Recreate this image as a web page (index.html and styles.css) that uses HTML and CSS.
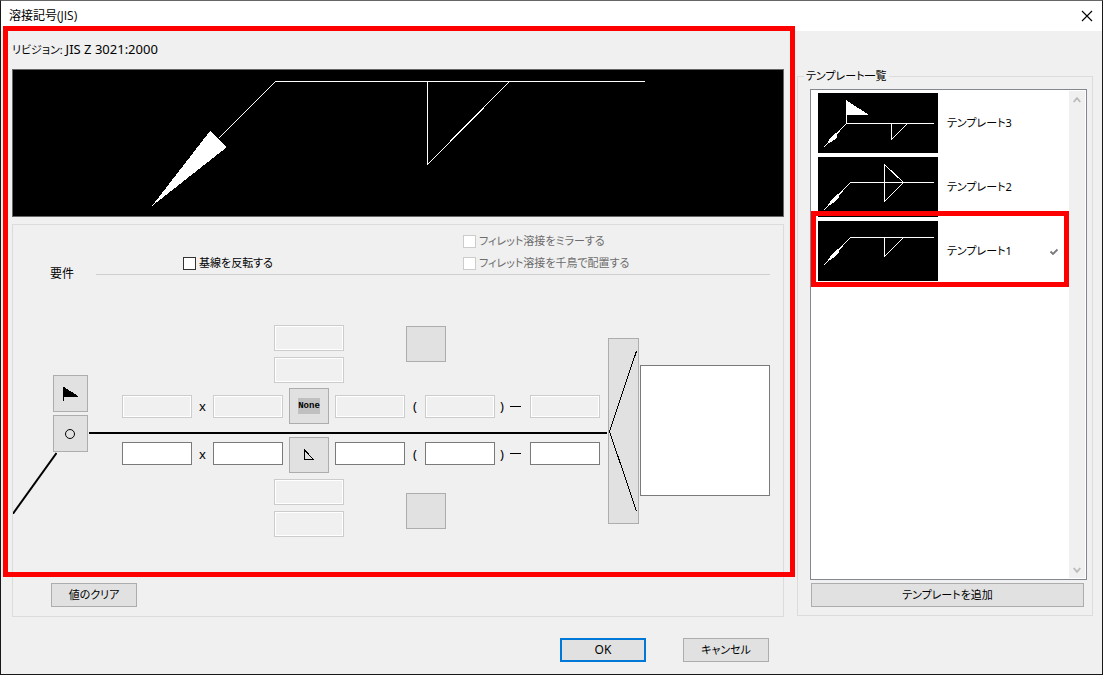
FILE: index.html
```html
<!DOCTYPE html>
<html lang="ja">
<head>
<meta charset="utf-8">
<meta name="viewport" content="width=device-width, initial-scale=1">
<title>溶接記号(JIS)</title>
<link rel="stylesheet" href="styles.css">
</head>
<body>
<div class="dialog" role="dialog" aria-labelledby="dialog-title">
  <header class="titlebar">
    <h1 class="title" id="dialog-title">溶接記号(JIS)</h1>
    <button class="close" type="button" aria-label="閉じる">
      <svg width="12" height="12" viewBox="0 0 12 12"><path d="M1 1 11 11M11 1 1 11" fill="none" stroke="#000" stroke-width="1.1"/></svg>
    </button>
  </header>

  <div class="content">
    <main class="editor">
      <p class="revision">リビジョン: <span class="standard">JIS Z 3021:2000</span></p>
      <div class="preview">
        <svg class="drawing" viewBox="13 70 770 146" preserveAspectRatio="xMidYMid meet" role="img" aria-label="溶接記号プレビュー">
          <path d="M218.500 138.500 275.500 81.500H645M427.500 81.500V164.500L509.500 81.500" class="stroke"/>
          <path d="M152 206 210 131 227 147Z" class="fill"/>
        </svg>
      </div>

      <section class="panel">
        <div class="requirements">
          <h2 class="requirements-label">要件</h2>
          <div class="options">
            <label class="check check-invert"><input type="checkbox">基線を反転する</label>
            <label class="check check-mirror"><input type="checkbox" disabled>フィレット溶接をミラーする</label>
            <label class="check check-stagger"><input type="checkbox" disabled>フィレット溶接を千鳥で配置する</label>
          </div>
        </div>

        <div class="symbol">
          <div class="leader">
            <button class="tool" type="button" aria-label="現場溶接">
              <svg width="16" height="16" viewBox="0 0 16 16" shape-rendering="crispEdges"><path d="M0 1h1l14 9v1H1v4H0z"/></svg>
            </button>
            <button class="tool" type="button" aria-label="全周溶接">
              <svg width="13" height="12" viewBox="0 0 13 12"><circle cx="6" cy="6" r="4.500" fill="none" stroke="#000"/></svg>
            </button>
            <svg class="leader-line" width="44" height="62" viewBox="0 0 44 62" aria-hidden="true"><path d="M-1 63 43.500 1" stroke="#000" stroke-width="2"/></svg>
          </div>

          <div class="fields">
            <div class="stack stack-top">
              <input class="field field-tall" type="text" aria-label="反対側 1" disabled>
              <input class="field field-tall" type="text" aria-label="反対側 2" disabled>
            </div>
            <button class="tool contour contour-top" type="button" aria-label="反対側の仕上げ"></button>

            <div class="line-row">
              <input class="field c-size" type="text" aria-label="反対側の寸法" disabled>
              <span class="sign c-times">x</span>
              <input class="field c-second" type="text" aria-label="反対側の寸法 2" disabled>
              <button class="tool c-kind" type="button"><span class="none">None</span></button>
              <input class="field c-length" type="text" aria-label="反対側の長さ" disabled>
              <span class="sign c-open">(</span>
              <input class="field c-count" type="text" aria-label="反対側の数" disabled>
              <span class="sign c-close">)<i class="dash"></i></span>
              <input class="field c-pitch" type="text" aria-label="反対側のピッチ" disabled>
            </div>

            <hr class="baseline">

            <div class="line-row line-row-arrow">
              <input class="field c-size" type="text" aria-label="矢の側の寸法">
              <span class="sign c-times">x</span>
              <input class="field c-second" type="text" aria-label="矢の側の寸法 2">
              <button class="tool c-kind" type="button" aria-label="すみ肉溶接">
                <svg width="12" height="12" viewBox="0 0 12 12" shape-rendering="crispEdges"><path d="M1.500 1V10.500H10.500Z" fill="none" stroke="#000"/></svg>
              </button>
              <input class="field c-length" type="text" aria-label="矢の側の長さ">
              <span class="sign c-open">(</span>
              <input class="field c-count" type="text" aria-label="矢の側の数">
              <span class="sign c-close">)<i class="dash"></i></span>
              <input class="field c-pitch" type="text" aria-label="矢の側のピッチ">
            </div>

            <div class="stack stack-bottom">
              <input class="field field-tall" type="text" aria-label="矢の側 1" disabled>
              <input class="field field-tall" type="text" aria-label="矢の側 2" disabled>
            </div>
            <button class="tool contour contour-bottom" type="button" aria-label="矢の側の仕上げ"></button>
          </div>

          <button class="tool tail" type="button" aria-label="尾">
            <svg width="29" height="184" viewBox="0 0 29 184" shape-rendering="crispEdges"><path d="M27.500 12 .5 92.500 27.500 172" fill="none" stroke="#000"/></svg>
          </button>
          <textarea class="note" aria-label="注記"></textarea>
        </div>

        <button class="button" type="button">値のクリア</button>
      </section>
      <div class="highlight highlight-editor"></div>
    </main>

    <fieldset class="templates">
      <legend class="legend">テンプレート一覧</legend>
      <div class="list">
        <ul class="items">
          <li class="item">
            <svg class="thumb" viewBox="818 93 120 60" aria-hidden="true">
              <path d="M823.500 147.500 846.500 123.500H934M846.500 123.500V100M891.500 123.500V139.500L907.500 123.500" class="stroke"/>
              <path d="M846 100 869 115H846Z" class="fill"/>
              <path d="M826 145 831 137 835 133 837 135V138L831 142Z" class="fill"/>
            </svg>
            <span class="name">テンプレート3</span>
          </li>
          <li class="item">
            <svg class="thumb" viewBox="818 157 120 60" aria-hidden="true">
              <path d="M823.500 210.500 850.500 182.500H934M884.500 164.500V201.500L903.500 182.500Z" class="stroke"/>
              <path d="M826 208 832 199 837 194 839 195V198L833 203Z" class="fill"/>
            </svg>
            <span class="name">テンプレート2</span>
          </li>
          <li class="item item-current">
            <svg class="thumb" viewBox="818 221 120 60" aria-hidden="true">
              <path d="M823.500 265.500 850.500 237.500H934M884.500 237.500V256.500L903.500 237.500" class="stroke"/>
              <path d="M826 263 832 254 837 249 839 250V253L833 258Z" class="fill"/>
            </svg>
            <span class="name">テンプレート1</span>
            <svg class="tick" width="10" height="8" viewBox="0 0 10 8" aria-label="選択中"><path d="M1.500 4.500 4 7 8.500 2.500" fill="none" stroke="#7a7a7a" stroke-width="1.800"/></svg>
            <div class="highlight highlight-item"></div>
          </li>
        </ul>
        <div class="scrollbar">
          <button class="arrow" type="button" aria-label="上へ" disabled><svg width="8" height="8" viewBox="0 0 8 8"><path d="M.7 6 4 2.200 7.300 6" fill="none" stroke="#bababa" stroke-width="1.800"/></svg></button>
          <button class="arrow" type="button" aria-label="下へ" disabled><svg width="8" height="8" viewBox="0 0 8 8"><path d="M.7 2 4 5.800 7.300 2" fill="none" stroke="#bababa" stroke-width="1.800"/></svg></button>
        </div>
      </div>
      <button class="button button-add" type="button">テンプレートを追加</button>
    </fieldset>
  </div>

  <footer class="actions">
    <button class="button button-default" type="button">OK</button>
    <button class="button" type="button">キャンセル</button>
  </footer>
</div>
</body>
</html>
```

FILE: styles.css
```css
* {
  box-sizing: border-box;
}

body,
h1,
h2,
p,
ul {
  margin: 0;
  padding: 0;
}

body,
button,
input,
textarea {
  font-family: "Noto Sans", "Noto Sans CJK JP", sans-serif;
  font-size: 11px;
  line-height: 16px;
  font-feature-settings: "palt";
  color: #000;
}

.dialog {
  display: flex;
  flex-direction: column;
  min-height: 100vh;
  min-width: 960px;
  background: #f0f0f0;
  border: 1px solid #181818;
  border-top-color: #666;
}

.titlebar {
  display: flex;
  align-items: center;
  justify-content: space-between;
  height: 30px;
  padding: 0 9px 0 8px;
  background: #fff;
}

.title {
  font-family: "Open Sans", "Noto Sans CJK JP", sans-serif;
  font-size: 12px;
  font-weight: 400;
}

.close {
  display: flex;
  padding: 0;
  border: 0;
  background: none;
}

.content {
  display: flex;
  flex: 1;
  gap: 13px;
  padding: 0 9px 0 11px;
}

.editor {
  position: relative;
  display: flex;
  flex: 1;
  flex-direction: column;
}

.revision {
  padding: 10px 0 11px;
}

.standard {
  font-size: 13px;
}

.preview {
  display: flex;
  height: 148px;
  margin-bottom: 7px;
  border: 1px solid #666;
  background: #000;
}

.drawing {
  width: 100%;
  height: 100%;
}

.drawing,
.thumb {
  shape-rendering: crispEdges;
}

.stroke {
  fill: none;
  stroke: #fff;
  stroke-width: 1px;
}

.fill {
  fill: #fff;
}

.panel {
  flex: 1;
  padding: 5px 13px 9px 0;
  border: 1px solid #dcdcdc;
}

.requirements {
  display: flex;
  align-items: flex-start;
  padding-left: 37px;
}

.requirements-label {
  width: 46px;
  padding-top: 36px;
  font-size: 12px;
  font-weight: 400;
}

.options {
  display: grid;
  flex: 1;
  grid-template-columns: 280px 1fr;
  grid-template-rows: 22px 22px;
  align-items: center;
  padding-left: 87px;
  border-bottom: 1px solid #d0d0d0;
}

.check {
  display: flex;
  align-items: center;
  gap: 3px;
}

.check:has(:disabled) {
  color: #6d6d6d;
}

.check input {
  width: 13px;
  height: 13px;
  margin: 0;
  appearance: none;
  border: 1px solid #333;
  background: #fff;
}

.check input:disabled {
  border-color: #ccc;
}

.check-invert {
  grid-area: 2 / 1;
}

.check-mirror {
  grid-area: 1 / 2;
}

.check-stagger {
  grid-area: 2 / 2;
}

.symbol {
  display: flex;
  align-items: flex-start;
  margin: 43px 0 46px;
}

.leader {
  display: flex;
  flex-direction: column;
  gap: 3px;
  width: 76px;
  padding-top: 50px;
}

.tool {
  display: flex;
  align-items: center;
  justify-content: center;
  padding: 0;
  border: 1px solid #adadad;
  background: #e1e1e1;
}

.leader .tool {
  width: 35px;
  height: 37px;
  margin-left: 40px;
}

.leader-line {
  margin-top: -3px;
}

.fields,
.line-row {
  display: grid;
  grid-template-columns: 33px 1fr 21px 1fr 6px 40px 6px 1fr 20px 1fr 35px 1fr 7px;
}

.fields {
  flex: 1;
}

.line-row {
  grid-area: 2 / 1 / auto / -1;
  align-items: center;
  margin-top: 5px;
}

.line-row-arrow {
  grid-row: 4;
  margin-top: 3px;
}

.line-row-arrow .field,
.line-row-arrow .sign {
  margin-bottom: 3px;
}

.c-size { grid-column: 2; }
.c-times { grid-column: 3; }
.c-second { grid-column: 4; }
.c-kind { grid-column: 6; }
.c-length { grid-column: 8; }
.c-open { grid-column: 9; }
.c-count { grid-column: 10; }
.c-close { grid-column: 11; }
.c-pitch { grid-column: 12; }

.c-kind {
  height: 36px;
}

.field {
  width: 100%;
  min-width: 0;
  height: 23px;
  padding: 0 3px;
  border: 1px solid #7a7a7a;
  background: #fff;
}

.field:disabled {
  border-color: #ccc;
  background: #f0f0f0;
  box-shadow: inset 0 0 0 1px #fff;
}

.field-tall {
  height: 26px;
}

.sign {
  display: flex;
  align-items: center;
  justify-content: center;
  font-size: 13px;
}

.c-close {
  justify-content: flex-start;
  gap: 6px;
  padding-left: 5px;
}

.dash {
  width: 11px;
  border-top: 1px solid #000;
}

.stack {
  display: grid;
  grid-column: 4 / 9;
  gap: 6px;
  justify-self: center;
  width: 70px;
}

.stack-top {
  grid-row: 1;
}

.stack-bottom {
  grid-row: 5;
  margin-top: 6px;
}

.contour {
  grid-column: 9 / 11;
  width: 40px;
  height: 36px;
  margin: 1px;
}

.contour-top {
  grid-row: 1;
}

.contour-bottom {
  grid-row: 5;
  align-self: end;
  margin-bottom: 8px;
}

.baseline {
  grid-area: 3 / 1 / auto / -1;
  width: 100%;
  height: 2px;
  margin: 8px 0 0;
  border: 0;
  background: #000;
}

.none {
  background: #c0c0c0;
  font-family: "Liberation Mono", monospace;
  font-size: 9px;
  font-weight: 700;
}

.tail {
  width: 31px;
  height: 186px;
  margin: 13px 1px 0;
}

.note {
  width: 130px;
  height: 131px;
  margin-top: 40px;
  border: 1px solid #7a7a7a;
  border-radius: 0;
  background: #fff;
  resize: none;
}

.button {
  width: 86px;
  height: 24px;
  padding: 0;
  border: 1px solid #adadad;
  background: #e1e1e1;
}

.panel > .button {
  display: block;
  margin-left: 38px;
}

.button-default {
  border: 2px solid #0078d7;
  font-size: 12px;
}

.highlight {
  position: absolute;
  z-index: 1;
  border: 5px solid #f00;
  pointer-events: none;
}

.highlight-editor {
  inset: -5px -11px 40px -9px;
}

.highlight-item {
  inset: -10px 0 -6px;
}

.templates {
  display: flex;
  flex-direction: column;
  width: 296px;
  margin: 37px 0 1px;
  padding: 5px 5px 8px 12px;
  border: 1px solid #dcdcdc;
}

.legend {
  margin-left: -6px;
  padding: 0 2px;
}

.list {
  display: flex;
  flex: 1;
  border: 1px solid #828790;
  background: #fff;
}

.items {
  display: flex;
  flex: 1;
  flex-direction: column;
  gap: 4px;
  padding-top: 3px;
  list-style: none;
}

.item {
  position: relative;
  display: flex;
  align-items: center;
  gap: 9px;
  padding: 0 10px 0 7px;
}

.thumb {
  width: 120px;
  height: 60px;
  background: #000;
}

.tick {
  margin-left: auto;
}

.scrollbar {
  display: flex;
  flex-direction: column;
  justify-content: space-between;
  width: 16px;
  margin: 1px 1px 1px 0;
  background: #f0f0f0;
}

.arrow {
  display: flex;
  align-items: center;
  justify-content: center;
  height: 17px;
  padding: 0;
  border: 0;
  background: none;
}

.button-add {
  width: auto;
  margin: 3px 3px 0 1px;
}

.actions {
  display: flex;
  justify-content: flex-end;
  gap: 37px;
  padding: 21px 333px 12px 0;
}
```
